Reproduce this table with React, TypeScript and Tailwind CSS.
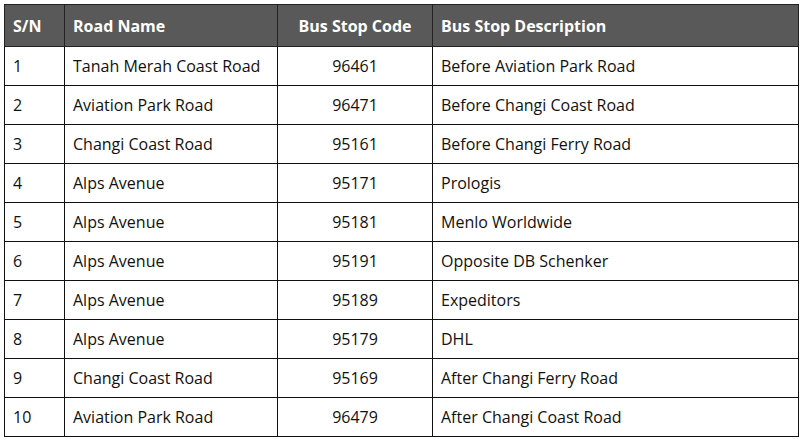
import React from "react";

const rows: [string, string, string, string][] = [
  ["1", "Tanah Merah Coast Road", "96461", "Before Aviation Park Road"],
  ["2", "Aviation Park Road", "96471", "Before Changi Coast Road"],
  ["3", "Changi Coast Road", "95161", "Before Changi Ferry Road"],
  ["4", "Alps Avenue", "95171", "Prologis"],
  ["5", "Alps Avenue", "95181", "Menlo Worldwide"],
  ["6", "Alps Avenue", "95191", "Opposite DB Schenker"],
  ["7", "Alps Avenue", "95189", "Expeditors"],
  ["8", "Alps Avenue", "95179", "DHL"],
  ["9", "Changi Coast Road", "95169", "After Changi Ferry Road"],
  ["10", "Aviation Park Road", "96479", "After Changi Coast Road"],
];

export default function App() {
  return (
    <div className="w-[802px] h-[439px] bg-white pt-[4px] pl-[4px]" style={{ fontFamily: '"Open Sans", "Noto Sans", sans-serif' }}>
      <table className="border-collapse table-fixed w-[794px] text-[16px] text-[#111]">
        <colgroup>
          <col className="w-[60px]" />
          <col className="w-[213px]" />
          <col className="w-[155px]" />
          <col className="w-[366px]" />
        </colgroup>
        <thead>
          <tr className="h-[42px] bg-[#595959] text-white font-bold">
            <th className="border border-[#222] text-left pl-[8px] font-bold">S/N</th>
            <th className="border border-[#222] text-left pl-[8px] font-bold">Road Name</th>
            <th className="border border-[#222] text-center font-bold">Bus Stop Code</th>
            <th className="border border-[#222] text-left pl-[8px] font-bold">Bus Stop Description</th>
          </tr>
        </thead>
        <tbody>
          {rows.map((r) => (
            <tr key={r[0]} className="h-[39px]">
              <td className="border border-[#111] pl-[8px]">{r[0]}</td>
              <td className="border border-[#111] pl-[8px]">{r[1]}</td>
              <td className="border border-[#111] text-center">{r[2]}</td>
              <td className="border border-[#111] pl-[8px]">{r[3]}</td>
            </tr>
          ))}
        </tbody>
      </table>
    </div>
  );
}
